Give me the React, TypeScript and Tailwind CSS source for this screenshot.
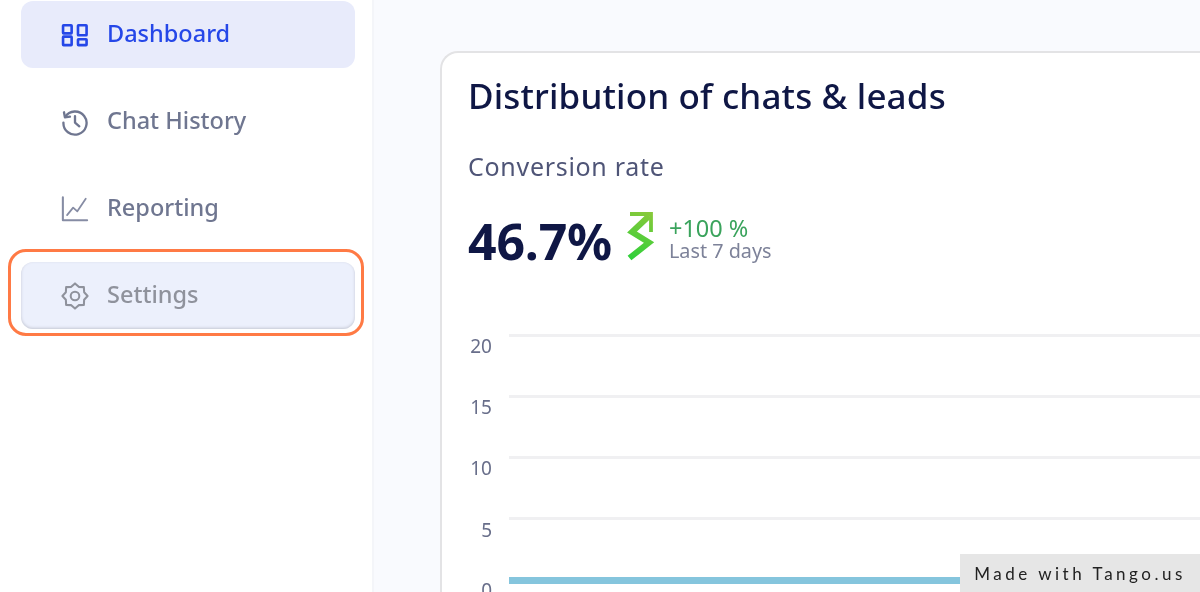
import React from "react";

const F = "font-['Noto_Sans','Open_Sans',sans-serif]";

function DashIcon() {
  return (
    <svg width="30" height="26" viewBox="0 0 30 26" fill="none" stroke="#2547e8" strokeWidth="2.8">
      <rect x="2.2" y="2.6" width="9.2" height="8.7" rx="0.6" />
      <rect x="18.2" y="2.6" width="9.2" height="10.7" rx="0.6" />
      <rect x="2.2" y="14.8" width="9.2" height="9" rx="0.6" />
      <rect x="18.2" y="17.6" width="9.2" height="6.2" rx="0.6" />
    </svg>
  );
}

function HistoryIcon() {
  return (
    <svg width="30" height="30" viewBox="0 0 30 30" fill="none" stroke="#6f7690" strokeWidth="2.5" strokeLinecap="round" strokeLinejoin="round">
      <path d="M4.5 9.5A12.4 12.4 0 1 1 2.6 15.6" />
      <path d="M3.2 4.6l1 5.4 5.4-.8" />
      <path d="M15 8.8v6.8l4.6 4" />
    </svg>
  );
}

function ChartIcon() {
  return (
    <svg width="30" height="28" viewBox="0 0 30 28" fill="none" stroke="#868ca4" strokeWidth="1.9" strokeLinejoin="round" strokeLinecap="round">
      <path d="M2 1.5V26H28" strokeWidth="2.2" />
      <path d="M6.5 20.5L13 12.5L17.5 16.5L26.5 3" />
    </svg>
  );
}

function GearIcon() {
  return (
    <svg width="30" height="30" viewBox="0 0 30 30" fill="none" stroke="#8f929c" strokeWidth="2.2" strokeLinejoin="round">
      <path d="M15 1.5L19 5.2L24.5 5.5L24.8 11L28.5 15L24.8 19L24.5 24.5L19 24.8L15 28.5L11 24.8L5.5 24.5L5.2 19L1.5 15L5.2 11L5.5 5.5L11 5.2Z" />
      <circle cx="15" cy="15" r="4.6" />
    </svg>
  );
}

function TrendIcon() {
  return (
    <svg width="30" height="50" viewBox="0 0 30 50" fill="none">
      <defs>
        <linearGradient id="tg" gradientUnits="userSpaceOnUse" x1="6" y1="48" x2="22" y2="2">
          <stop offset="0" stopColor="#2fd03a" />
          <stop offset="1" stopColor="#86c93a" />
        </linearGradient>
      </defs>
      <path d="M23 5L6 21L23 31.5L3.5 47" stroke="url(#tg)" strokeWidth="6" strokeLinejoin="miter" />
      <path d="M4 3H25V21" stroke="url(#tg)" strokeWidth="3.8" />
    </svg>
  );
}

function NavItem({
  icon,
  label,
  className,
  textClass,
}: {
  icon: React.ReactNode;
  label: string;
  className?: string;
  textClass: string;
}) {
  return (
    <div className={`flex h-[67px] items-center rounded-[12px] ${className ?? ""}`}>
      <div className="ml-[40px] flex w-[28px] items-center justify-center">{icon}</div>
      <span className={`mb-[2px] ml-[18px] text-[23.5px] font-medium leading-none ${textClass}`}>{label}</span>
    </div>
  );
}

function GridRow({ label, h = "h-[61px]", labelClass = "" }: { label: string; h?: string; labelClass?: string }) {
  return (
    <div className={`flex items-start ${h}`}>
      <span className={`w-[24px] text-right text-[19px] leading-[20px] text-[#686e8a] ${labelClass}`}>{label}</span>
      <div className="ml-[17px] mt-[-1px] h-[3px] flex-1 bg-[#f0f0f2]" />
    </div>
  );
}

export default function App() {
  return (
    <div className={`relative flex h-[592px] w-[1200px] overflow-hidden bg-[#f9fafe] blur-[0.4px] ${F}`}>
      <aside className="flex h-full w-[374px] shrink-0 flex-col gap-[20px] border-r-2 border-[#f4f5f9] bg-white pl-[21px] pr-[17px] pt-[1px]">
        <NavItem icon={<DashIcon />} label="Dashboard" className="bg-[#e8ebfb]" textClass="text-[#2547e8]" />
        <NavItem icon={<HistoryIcon />} label="Chat History" textClass="text-[#6f7690]" />
        <NavItem icon={<ChartIcon />} label="Reporting" textClass="text-[#6f7690]" />
        <NavItem
          icon={<GearIcon />}
          label="Settings"
          className="bg-[#ecf0fc] shadow-[inset_0_-1px_3px_#c4c7d3]"
          textClass="text-[#8f929c]"
        />
      </aside>

      <div className="absolute left-[8px] top-[249px] h-[87px] w-[356px] rounded-[18px] border-[3px] border-[#ff7a45]" />

      <main className="min-w-0 flex-1 pl-[66px] pt-[51px]">
        <section className="h-[600px] w-[800px] rounded-tl-[18px] border-l-2 border-t-2 border-[#e3e3e5] bg-white pl-[26px]">
          <h2 className="mt-[20px] text-[35px] font-medium leading-[46px] tracking-[0.15px] text-[#0f1745]">Distribution of chats &amp; leads</h2>
          <p className="mt-[31px] text-[25px] leading-[32px] tracking-[0.7px] text-[#4f5577]">Conversion rate</p>
          <div className="mt-[29px] flex items-center">
            <span className="text-[50px] font-bold leading-[60px] tracking-[-0.2px] text-[#0f1745]">46.7%</span>
            <div className="-mt-[10px] ml-[14px]"><TrendIcon /></div>
            <div className="-mt-[5px] ml-[13px] flex flex-col">
              <span className="text-[23.5px] leading-[24px] text-[#3aa35c]">+100 %</span>
              <span className="text-[19.8px] leading-[22px] text-[#7d8299]">Last 7 days</span>
            </div>
          </div>
          <div className="mt-[64px]">
            <GridRow label="20" labelClass="mt-[1px]" />
            <GridRow label="15" labelClass="mt-[1px]" />
            <GridRow label="10" labelClass="mt-[1px]" />
            <GridRow label="5" h="h-[59px]" labelClass="mt-[2px]" />
            <div className="flex items-start">
              <span className="mt-[3px] w-[24px] text-right text-[19px] leading-[20px] text-[#686e8a]">0</span>
              <div className="ml-[17px] h-[7px] flex-1 bg-[#85c5dd]" />
            </div>
          </div>
        </section>
      </main>

      <div className="absolute bottom-0 right-0 flex h-[38px] w-[240px] items-center justify-center bg-[#e6e6e6] pt-[1px] font-['Lato',sans-serif] text-[17px] tracking-[3.5px] text-[#222222]">
        Made with Tango.us
      </div>
    </div>
  );
}
